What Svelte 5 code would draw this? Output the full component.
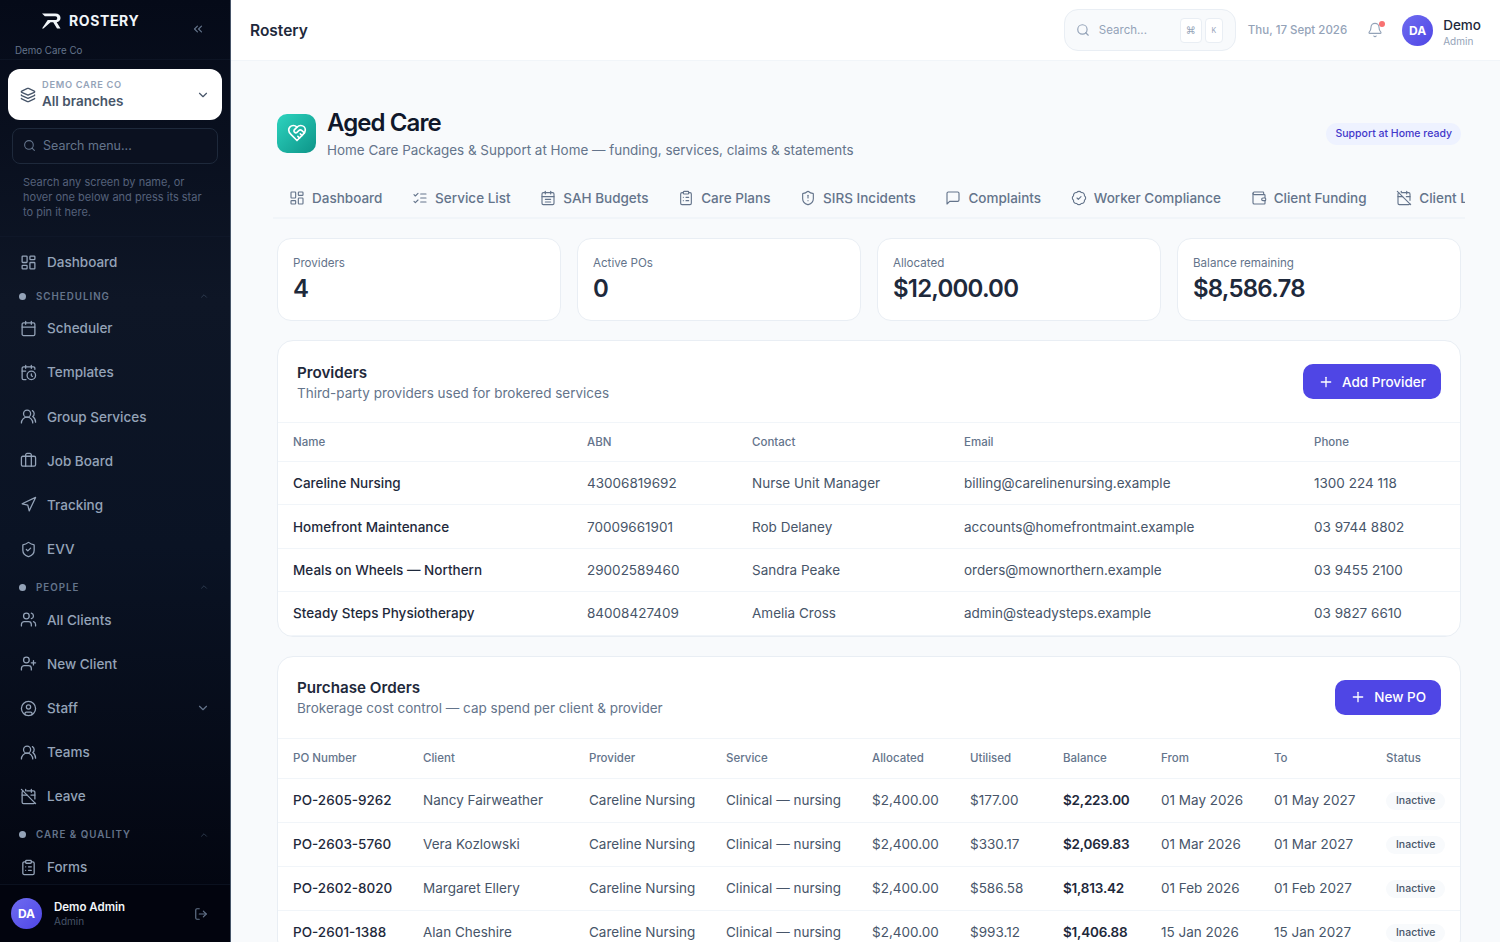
<script>
  const icons = {
    dashboard: '<rect width="7" height="9" x="3" y="3" rx="1"/><rect width="7" height="5" x="14" y="3" rx="1"/><rect width="7" height="9" x="14" y="12" rx="1"/><rect width="7" height="5" x="3" y="16" rx="1"/>',
    calendar: '<path d="M8 2v4"/><path d="M16 2v4"/><rect width="18" height="18" x="3" y="4" rx="2"/><path d="M3 10h18"/>',
    calendarClock: '<path d="M21 7.5V6a2 2 0 0 0-2-2H5a2 2 0 0 0-2 2v14a2 2 0 0 0 2 2h3.5"/><path d="M16 2v4"/><path d="M8 2v4"/><path d="M3 10h5"/><path d="M17.5 17.5 16 16.3V14"/><circle cx="16" cy="16" r="6"/>',
    users: '<path d="M18 21a8 8 0 0 0-16 0"/><circle cx="10" cy="8" r="5"/><path d="M22 20c0-3.37-2-6.5-4-8a5 5 0 0 0-.45-8.3"/>',
    usersRound: '<path d="M16 21v-2a4 4 0 0 0-4-4H6a4 4 0 0 0-4 4v2"/><circle cx="9" cy="7" r="4"/><path d="M22 21v-2a4 4 0 0 0-3-3.87"/><path d="M16 3.13a4 4 0 0 1 0 7.75"/>',
    briefcase: '<path d="M16 20V4a2 2 0 0 0-2-2h-4a2 2 0 0 0-2 2v16"/><rect width="20" height="14" x="2" y="6" rx="2"/>',
    send: '<polygon points="3 11 22 2 13 21 11 13 3 11"/>',
    shieldCheck: '<path d="M20 13c0 5-3.5 7.5-7.66 8.95a1 1 0 0 1-.67-.01C7.5 20.5 4 18 4 13V6a1 1 0 0 1 1-1c2 0 4.5-1.2 6.24-2.72a1.17 1.17 0 0 1 1.52 0C14.51 3.81 17 5 19 5a1 1 0 0 1 1 1z"/><path d="m9 12 2 2 4-4"/>',
    shieldAlert: '<path d="M20 13c0 5-3.5 7.5-7.66 8.95a1 1 0 0 1-.67-.01C7.5 20.5 4 18 4 13V6a1 1 0 0 1 1-1c2 0 4.5-1.2 6.24-2.72a1.17 1.17 0 0 1 1.52 0C14.51 3.81 17 5 19 5a1 1 0 0 1 1 1z"/><path d="M12 8v4"/><path d="M12 16h.01"/>',
    userPlus: '<path d="M16 21v-2a4 4 0 0 0-4-4H6a4 4 0 0 0-4 4v2"/><circle cx="9" cy="7" r="4"/><path d="M19 8v6"/><path d="M22 11h-6"/>',
    circleUser: '<circle cx="12" cy="12" r="10"/><circle cx="12" cy="10" r="3"/><path d="M7 20.662V19a2 2 0 0 1 2-2h6a2 2 0 0 1 2 2v1.662"/>',
    calendarOff: '<path d="M4.2 4.2A2 2 0 0 0 3 6v14a2 2 0 0 0 2 2h14a2 2 0 0 0 1.82-1.18"/><path d="M21 15.5V6a2 2 0 0 0-2-2H9.5"/><path d="M16 2v4"/><path d="M8 2v2"/><path d="M3 10h7"/><path d="M21 10h-5.5"/><path d="m2 2 20 20"/>',
    clipboard: '<rect width="8" height="4" x="8" y="2" rx="1"/><path d="M16 4h2a2 2 0 0 1 2 2v14a2 2 0 0 1-2 2H6a2 2 0 0 1-2-2V6a2 2 0 0 1 2-2h2"/><path d="M12 11h4"/><path d="M12 16h4"/><path d="M8 11h.01"/><path d="M8 16h.01"/>',
    listChecks: '<path d="m3 17 2 2 4-4"/><path d="m3 7 2 2 4-4"/><path d="M13 6h8"/><path d="M13 12h8"/><path d="M13 18h8"/>',
    calendarLines: '<path d="M8 2v4"/><path d="M16 2v4"/><rect width="18" height="18" x="3" y="4" rx="2"/><path d="M3 10h18"/><path d="M8 14h8"/><path d="M8 18h8"/>',
    message: '<path d="M21 15a2 2 0 0 1-2 2H7l-4 4V5a2 2 0 0 1 2-2h14a2 2 0 0 1 2 2z"/>',
    badgeCheck: '<path d="M3.85 8.62a4 4 0 0 1 4.78-4.77 4 4 0 0 1 6.74 0 4 4 0 0 1 4.78 4.78 4 4 0 0 1 0 6.74 4 4 0 0 1-4.77 4.78 4 4 0 0 1-6.75 0 4 4 0 0 1-4.78-4.77 4 4 0 0 1 0-6.76Z"/><path d="m9 12 2 2 4-4"/>',
    wallet: '<path d="M19 7V4a1 1 0 0 0-1-1H5a2 2 0 0 0 0 4h15a1 1 0 0 1 1 1v4h-3a2 2 0 0 0 0 4h3a1 1 0 0 0 1-1v-2a1 1 0 0 0-1-1"/><path d="M3 5v14a2 2 0 0 0 2 2h15a1 1 0 0 0 1-1v-4"/>',
    layers: '<path d="M12.83 2.18a2 2 0 0 0-1.66 0L2.6 6.08a1 1 0 0 0 0 1.83l8.58 3.91a2 2 0 0 0 1.66 0l8.58-3.9a1 1 0 0 0 0-1.83Z"/><path d="M2 12a1 1 0 0 0 .58.91l8.6 3.91a2 2 0 0 0 1.65 0l8.58-3.9A1 1 0 0 0 22 12"/><path d="M2 17a1 1 0 0 0 .58.91l8.6 3.91a2 2 0 0 0 1.65 0l8.58-3.9A1 1 0 0 0 22 17"/>',
    chevronsLeft: '<path d="m11 17-5-5 5-5"/><path d="m18 17-5-5 5-5"/>',
    chevronDown: '<path d="m6 9 6 6 6-6"/>',
    chevronUp: '<path d="m18 15-6-6-6 6"/>',
    search: '<path d="m21 21-4.34-4.34"/><circle cx="11" cy="11" r="8"/>',
    bell: '<path d="M10.268 21a2 2 0 0 0 3.464 0"/><path d="M3.262 15.326A1 1 0 0 0 4 17h16a1 1 0 0 0 .74-1.673C19.41 13.956 18 12.499 18 8A6 6 0 0 0 6 8c0 4.499-1.411 5.956-2.738 7.326"/>',
    heart: '<path d="M19 14c1.49-1.46 3-3.21 3-5.5A5.5 5.5 0 0 0 16.5 3c-1.76 0-3 .5-4.5 2-1.5-1.5-2.74-2-4.5-2A5.5 5.5 0 0 0 2 8.5c0 2.3 1.5 4.05 3 5.5l7 7Z"/><path d="M12 5 9.04 7.96a2.17 2.17 0 0 0 0 3.08c.82.82 2.13.85 3 .07l2.07-1.9a2.82 2.82 0 0 1 3.79 0l2.96 2.66"/><path d="m18 15-2-2"/><path d="m15 18-2-2"/>',
    logout: '<path d="M9 21H5a2 2 0 0 1-2-2V5a2 2 0 0 1 2-2h4"/><path d="m16 17 5-5-5-5"/><path d="M21 12H9"/>',
    plus: '<path d="M5 12h14"/><path d="M12 5v14"/>'
  };

  const nav = [
    { label: "Dashboard", icon: "dashboard" },
    { section: "Scheduling", first: true },
    { label: "Scheduler", icon: "calendar" },
    { label: "Templates", icon: "calendarClock" },
    { label: "Group Services", icon: "users" },
    { label: "Job Board", icon: "briefcase" },
    { label: "Tracking", icon: "send" },
    { label: "EVV", icon: "shieldCheck" },
    { section: "People" },
    { label: "All Clients", icon: "usersRound" },
    { label: "New Client", icon: "userPlus" },
    { label: "Staff", icon: "circleUser", more: true },
    { label: "Teams", icon: "users" },
    { label: "Leave", icon: "calendarOff" },
    { section: "Care & Quality" },
    { label: "Forms", icon: "clipboard" }
  ];

  const tabs = [
    { label: "Dashboard", icon: "dashboard" },
    { label: "Service List", icon: "listChecks" },
    { label: "SAH Budgets", icon: "calendarLines" },
    { label: "Care Plans", icon: "clipboard" },
    { label: "SIRS Incidents", icon: "shieldAlert" },
    { label: "Complaints", icon: "message" },
    { label: "Worker Compliance", icon: "badgeCheck" },
    { label: "Client Funding", icon: "wallet" },
    { label: "Client Leave", icon: "calendarOff" }
  ];

  const stats = [
    { label: "Providers", value: "4" },
    { label: "Active POs", value: "0" },
    { label: "Allocated", value: "$12,000.00" },
    { label: "Balance remaining", value: "$8,586.78" }
  ];

  const providers = [
    ["Careline Nursing", "43006819692", "Nurse Unit Manager", "billing@carelinenursing.example", "1300 224 118"],
    ["Homefront Maintenance", "70009661901", "Rob Delaney", "accounts@homefrontmaint.example", "03 9744 8802"],
    ["Meals on Wheels — Northern", "29002589460", "Sandra Peake", "orders@mownorthern.example", "03 9455 2100"],
    ["Steady Steps Physiotherapy", "84008427409", "Amelia Cross", "admin@steadysteps.example", "03 9827 6610"]
  ];

  const orders = [
    ["PO-2605-9262", "Nancy Fairweather", "$177.00", "$2,223.00", "01 May 2026", "01 May 2027"],
    ["PO-2603-5760", "Vera Kozlowski", "$330.17", "$2,069.83", "01 Mar 2026", "01 Mar 2027"],
    ["PO-2602-8020", "Margaret Ellery", "$586.58", "$1,813.42", "01 Feb 2026", "01 Feb 2027"],
    ["PO-2601-1388", "Alan Cheshire", "$993.12", "$1,406.88", "15 Jan 2026", "15 Jan 2027"]
  ];
</script>

{#snippet icon(name, size = 18, weight = 2)}
  <svg class="icon" width={size} height={size} viewBox="0 0 24 24" fill="none" stroke="currentColor" stroke-width={weight} stroke-linecap="round" stroke-linejoin="round">{@html icons[name]}</svg>
{/snippet}

<div class="app">
  <aside class="sidebar">
    <div class="brand">
      <div class="brand-row">
        <div class="logo">
          <svg width="19" height="16" viewBox="0 0 20 16" fill="#f1f5f9"><path d="M0 0H14C17.500 0 19.500 2 19.500 4.800 19.500 7.200 17.800 8.800 15.500 9.200L19.500 16H15.800L11.800 9.400H9L1.500 16H0L6 7H14C15.400 7 16 6 16 5 16 3.800 15.300 3 14 3H3Z"/></svg>
          <span>ROSTERY</span>
        </div>
        <span class="collapse">{@render icon("chevronsLeft", 14)}</span>
      </div>
      <div class="org">Demo Care Co</div>
    </div>

    <div class="branch">
      <span class="branch-icon">{@render icon("layers", 16)}</span>
      <div class="branch-text">
        <div class="branch-org">DEMO CARE CO</div>
        <div class="branch-name">All branches</div>
      </div>
      <span class="branch-chev">{@render icon("chevronDown", 14)}</span>
    </div>

    <div class="menu-search">
      {@render icon("search", 13)}
      <span>Search menu...</span>
    </div>
    <p class="hint">Search any screen by name, or hover one below and press its star to pin it here.</p>

    <nav class="nav">
      {#each nav as item}
        {#if item.section}
          <div class="section" class:first={item.first}>
            <i></i>
            <span>{item.section}</span>
            <em>{@render icon("chevronUp", 10)}</em>
          </div>
        {:else}
          <div class="nav-item">
            {@render icon(item.icon, 17, 1.8)}
            <span>{item.label}</span>
            {#if item.more}<em>{@render icon("chevronDown", 14)}</em>{/if}
          </div>
        {/if}
      {/each}
    </nav>

    <div class="me">
      <div class="avatar">DA</div>
      <div class="me-text">
        <div class="me-name">Demo Admin</div>
        <div class="me-role">Admin</div>
      </div>
      <span class="me-out">{@render icon("logout", 14)}</span>
    </div>
  </aside>

  <div class="page">
    <header class="topbar">
      <div class="product">Rostery</div>
      <div class="search">
        {@render icon("search", 14)}
        <span class="search-text">Search...</span>
        <kbd class="cmd">⌘</kbd>
        <kbd>K</kbd>
      </div>
      <div class="date">Thu, 17 Sept 2026</div>
      <div class="bell">
        {@render icon("bell", 16, 1.7)}
        <i></i>
      </div>
      <div class="user">
        <div class="avatar">DA</div>
        <div class="user-text">
          <div class="user-name">Demo</div>
          <div class="user-role">Admin</div>
        </div>
      </div>
    </header>

    <main class="content">
      <section class="title-row">
        <div class="title-icon">{@render icon("heart", 20)}</div>
        <div class="title-text">
          <h1>Aged Care</h1>
          <p>Home Care Packages &amp; Support at Home — funding, services, claims &amp; statements</p>
        </div>
        <span class="pill">Support at Home ready</span>
      </section>

      <div class="tabs">
        {#each tabs as tab}
          <div class="tab">
            {@render icon(tab.icon, 16, 1.7)}
            <span>{tab.label}</span>
          </div>
        {/each}
      </div>

      <div class="stats">
        {#each stats as stat}
          <div class="stat">
            <div class="stat-label">{stat.label}</div>
            <div class="stat-value">{stat.value}</div>
          </div>
        {/each}
      </div>

      <section class="card">
        <div class="card-head">
          <div>
            <h2>Providers</h2>
            <p>Third-party providers used for brokered services</p>
          </div>
          <button>{@render icon("plus", 16)}Add Provider</button>
        </div>
        <table class="providers">
          <thead>
            <tr><th>Name</th><th>ABN</th><th>Contact</th><th>Email</th><th>Phone</th></tr>
          </thead>
          <tbody>
            {#each providers as row}
              <tr>
                {#each row as cell, i}
                  <td class:strong={i === 0}>{cell}</td>
                {/each}
              </tr>
            {/each}
          </tbody>
        </table>
      </section>

      <section class="card">
        <div class="card-head">
          <div>
            <h2>Purchase Orders</h2>
            <p>Brokerage cost control — cap spend per client &amp; provider</p>
          </div>
          <button>{@render icon("plus", 16)}New PO</button>
        </div>
        <table class="orders">
          <thead>
            <tr>
              <th>PO Number</th><th>Client</th><th>Provider</th><th>Service</th><th>Allocated</th>
              <th>Utilised</th><th>Balance</th><th>From</th><th>To</th><th>Status</th>
            </tr>
          </thead>
          <tbody>
            {#each orders as o}
              <tr>
                <td class="strong">{o[0]}</td>
                <td>{o[1]}</td>
                <td>Careline Nursing</td>
                <td>Clinical — nursing</td>
                <td>$2,400.00</td>
                <td>{o[2]}</td>
                <td class="bold">{o[3]}</td>
                <td>{o[4]}</td>
                <td>{o[5]}</td>
                <td><span class="status">Inactive</span></td>
              </tr>
            {/each}
          </tbody>
        </table>
      </section>
    </main>
  </div>
</div>

<style>
  :global(body) {
    margin: 0;
    font-family: Inter, "Liberation Sans", sans-serif;
    background: #f8fafc;
  }
  .app {
    display: flex;
    height: 942px;
    overflow: hidden;
  }
  .icon {
    display: block;
    flex: none;
  }

  .sidebar {
    width: 230px;
    flex: none;
    display: flex;
    flex-direction: column;
    border-right: 1px solid #475569;
    background: linear-gradient(180deg, #050a18 0%, #0e1626 32%, #0a1324 58%, #02040e 100%);
    color: #94a3b8;
    overflow: hidden;
  }
  .brand {
    height: 60px;
    padding: 0 15px;
    box-sizing: border-box;
    border-bottom: 1px solid #0d1424;
  }
  .brand-row {
    display: flex;
    align-items: center;
    position: relative;
    height: 41px;
    padding-left: 27px;
  }
  .logo {
    display: flex;
    align-items: center;
    gap: 8px;
    font-size: 14px;
    font-weight: 700;
    letter-spacing: 0.6px;
    color: #f1f5f9;
  }
  .collapse {
    position: absolute;
    right: 10px;
    top: 22px;
    color: #64748b;
  }
  .org {
    font-size: 9.75px;
    color: #64748b;
    margin-top: 4px;
  }
  .branch {
    display: flex;
    align-items: center;
    margin: 9px 8px 0;
    height: 51px;
    box-sizing: border-box;
    padding: 0 12px;
    background: #fff;
    border-radius: 12px;
    color: #475569;
  }
  .branch-text {
    flex: 1;
    margin: 0 0 2px 6px;
  }
  .branch-org {
    font-size: 9.25px;
    font-weight: 600;
    letter-spacing: 0.7px;
    color: #94a3b8;
  }
  .branch-name {
    font-size: 13.5px;
    font-weight: 600;
    color: #475569;
    margin-top: 3px;
  }
  .menu-search {
    display: flex;
    align-items: center;
    gap: 7px;
    margin: 8px 12px 0;
    height: 36px;
    padding: 0 0 2px 10px;
    box-sizing: border-box;
    border: 1px solid #1e293b;
    border-radius: 8px;
    background: #0b1120;
    color: #64748b;
    font-size: 12.5px;
  }
  .hint {
    margin: 11px 23px 0;
    font-size: 11px;
    line-height: 15px;
    color: #55617a;
  }
  .nav {
    flex: 1;
    margin-top: 16px;
    padding: 3px 0 0;
    border-top: 1px solid #0f1728;
    overflow: hidden;
  }
  .nav-item {
    display: flex;
    align-items: center;
    gap: 10px;
    height: 44.2px;
    padding: 0 20px;
    font-size: 13.5px;
    font-weight: 500;
  }
  .nav-item em,
  .section em {
    margin-left: auto;
    color: #64748b;
  }
  .section {
    display: flex;
    align-items: center;
    height: 22px;
    margin: 5px 0 -0.6px;
    padding: 0 21px 0 19px;
    font-size: 9.75px;
    font-weight: 600;
    letter-spacing: 1px;
    text-transform: uppercase;
    color: #64748b;
  }
  .section.first {
    margin: 1px 0 -1.1px;
  }
  .section i {
    width: 7px;
    height: 7px;
    border-radius: 50%;
    background: #94a3b8;
    margin-right: 10px;
  }
  .section em {
    color: #334155;
  }
  .me {
    display: flex;
    align-items: center;
    height: 57px;
    flex: none;
    padding: 0 22px 0 11px;
    border-top: 1px solid #0b111f;
    background: #02040e;
  }
  .avatar {
    width: 31px;
    height: 31px;
    flex: none;
    display: flex;
    align-items: center;
    justify-content: center;
    border-radius: 50%;
    background: linear-gradient(135deg, #6f6cf0, #4f46e5);
    color: #fff;
    font-size: 12px;
    font-weight: 700;
  }
  .me-text {
    flex: 1;
    margin-left: 12px;
  }
  .me-name {
    font-size: 11.500px;
    font-weight: 600;
    color: #f1f5f9;
  }
  .me-role {
    font-size: 10px;
    color: #475569;
    margin-top: 1px;
  }
  .me-out {
    color: #64748b;
  }

  .page {
    flex: 1;
    min-width: 0;
    display: flex;
    flex-direction: column;
  }
  .topbar {
    height: 61px;
    flex: none;
    box-sizing: border-box;
    display: flex;
    align-items: center;
    padding: 0 19px;
    background: #fff;
    border-bottom: 1px solid #f1f5f9;
  }
  .product {
    flex: 1;
    font-size: 15.5px;
    font-weight: 600;
    color: #1e293b;
  }
  .search {
    display: flex;
    align-items: center;
    width: 172px;
    height: 42px;
    box-sizing: border-box;
    padding: 0 12px 0 11px;
    border: 1px solid #e9eef4;
    border-radius: 14px;
    background: #f8fafc;
    color: #94a3b8;
  }
  .search-text {
    flex: 1;
    margin-left: 9px;
    font-size: 11.5px;
  }
  kbd {
    display: flex;
    align-items: center;
    justify-content: center;
    width: 18px;
    height: 25px;
    box-sizing: border-box;
    border: 1px solid #e9eef4;
    border-radius: 4px;
    background: #fff;
    font-family: Inter, sans-serif;
    font-size: 7px;
    color: #94a3b8;
  }
  .cmd {
    width: 22px;
    margin-right: 3px;
    font-family: "DejaVu Sans", sans-serif;
    font-size: 10px;
  }
  .date {
    margin-left: 12px;
    font-size: 11.5px;
    font-weight: 500;
    color: #94a3b8;
  }
  .bell {
    position: relative;
    margin: 0 19px 0 20px;
    color: #94a3b8;
  }
  .bell i {
    position: absolute;
    top: -1px;
    right: -2px;
    width: 6px;
    height: 6px;
    border-radius: 50%;
    background: #f87171;
  }
  .user {
    display: flex;
    align-items: center;
    gap: 10px;
  }
  .user-text {
    padding-top: 5px;
  }
  .user-name {
    font-size: 13.5px;
    font-weight: 500;
    color: #1e293b;
    line-height: 15px;
  }
  .user-role {
    font-size: 10px;
    color: #94a3b8;
    margin-top: 2px;
  }

  .content {
    flex: 1;
    padding: 45px 39px 0 46px;
    overflow: hidden;
  }
  .title-row {
    display: flex;
    align-items: center;
    gap: 11px;
  }
  .title-icon {
    width: 39px;
    height: 39px;
    display: flex;
    align-items: center;
    justify-content: center;
    box-sizing: border-box;
    border-radius: 10px;
    background: linear-gradient(135deg, #2dd4bf, #0d9488);
    color: #fff;
  }
  .title-text {
    flex: 1;
  }
  h1 {
    margin: 1px 0 0;
    font-size: 24px;
    line-height: 32px;
    font-weight: 600;
    letter-spacing: -0.9px;
    color: #0f172a;
  }
  .title-text p {
    margin: 1px 0 0;
    font-size: 13.45px;
    line-height: 20px;
    color: #64748b;
  }
  .pill {
    align-self: flex-start;
    margin-top: 17px;
    padding: 0 9px;
    height: 22px;
    line-height: 22px;
    border-radius: 11px;
    background: #eef2ff;
    color: #4338ca;
    font-size: 10.5px;
    font-weight: 500;
  }
  .tabs {
    display: flex;
    gap: 29.7px;
    margin: 20px -4px 0 -4px;
    padding: 0 0 2px 16px;
    height: 35px;
    align-items: center;
    border-bottom: 2px solid #f1f5f9;
    overflow: hidden;
    white-space: nowrap;
  }
  .tab {
    display: flex;
    align-items: center;
    gap: 7px;
    font-size: 13.5px;
    font-weight: 500;
    color: #64748b;
  }
  .stats {
    display: grid;
    grid-template-columns: repeat(4, 1fr);
    gap: 16px;
    margin-top: 19px;
  }
  .stat {
    height: 83px;
    box-sizing: border-box;
    padding: 16px 15px;
    background: #fff;
    border: 1px solid #e9eef4;
    border-radius: 14px;
  }
  .stat-label {
    font-size: 11.6px;
    line-height: 16px;
    color: #64748b;
  }
  .stat-value {
    margin-top: 2px;
    font-size: 24px;
    line-height: 32px;
    font-weight: 600;
    letter-spacing: -0.8px;
    color: #1e293b;
  }
  .card {
    margin-top: 19px;
    background: #fff;
    border: 1px solid #e9eef4;
    border-radius: 16px;
    overflow: hidden;
  }
  .card-head {
    display: flex;
    align-items: center;
    justify-content: space-between;
    height: 81px;
    padding: 0 19px;
    border-bottom: 1px solid #f1f5f9;
  }
  .card-head > div {
    padding-top: 3px;
  }
  .card + .card .card-head > div {
    padding-top: 1px;
  }
  h2 {
    margin: 0;
    font-size: 15.2px;
    line-height: 20px;
    font-weight: 600;
    color: #1e293b;
  }
  .card-head p {
    margin: 0;
    font-size: 13.5px;
    line-height: 20px;
    color: #64748b;
  }
  button {
    display: flex;
    align-items: center;
    gap: 8px;
    height: 35px;
    padding: 0 15px;
    border: none;
    border-radius: 10px;
    background: #4f46e5;
    color: #fff;
    font-family: inherit;
    font-size: 13.5px;
    font-weight: 500;
  }
  table {
    width: 100%;
    border-collapse: collapse;
    table-layout: fixed;
  }
  th {
    height: 38.5px;
    padding: 0 0 1px 15px;
    box-sizing: border-box;
    text-align: left;
    font-size: 11.5px;
    font-weight: 500;
    color: #64748b;
    border-bottom: 1px solid #f1f5f9;
  }
  .orders th {
    height: 39.5px;
  }
  td {
    box-sizing: border-box;
    padding: 0 0 0 15px;
    font-size: 13.5px;
    color: #475569;
    border-bottom: 1px solid #f1f5f9;
    white-space: nowrap;
  }
  .providers td {
    height: 43.4px;
  }
  .orders td {
    height: 44px;
  }
  td.strong {
    font-weight: 500;
    color: #1e293b;
  }
  td.bold {
    font-weight: 600;
    letter-spacing: -0.2px;
    color: #1e293b;
  }
  .providers th:nth-child(1) { width: 294px; }
  .providers th:nth-child(2) { width: 165px; }
  .providers th:nth-child(3) { width: 212px; }
  .providers th:nth-child(4) { width: 350px; }
  .orders th:nth-child(1) { width: 130px; }
  .orders th:nth-child(2) { width: 166px; }
  .orders th:nth-child(3) { width: 137px; }
  .orders th:nth-child(4) { width: 146px; }
  .orders th:nth-child(5) { width: 98px; }
  .orders th:nth-child(6) { width: 93px; }
  .orders th:nth-child(7) { width: 98px; }
  .orders th:nth-child(8) { width: 113px; }
  .orders th:nth-child(9) { width: 112px; }
  .status {
    display: inline-block;
    padding: 0 10px;
    height: 18px;
    line-height: 18px;
    border-radius: 9px;
    background: #f8fafc;
    font-size: 10.5px;
    font-weight: 500;
    color: #475569;
  }
</style>
